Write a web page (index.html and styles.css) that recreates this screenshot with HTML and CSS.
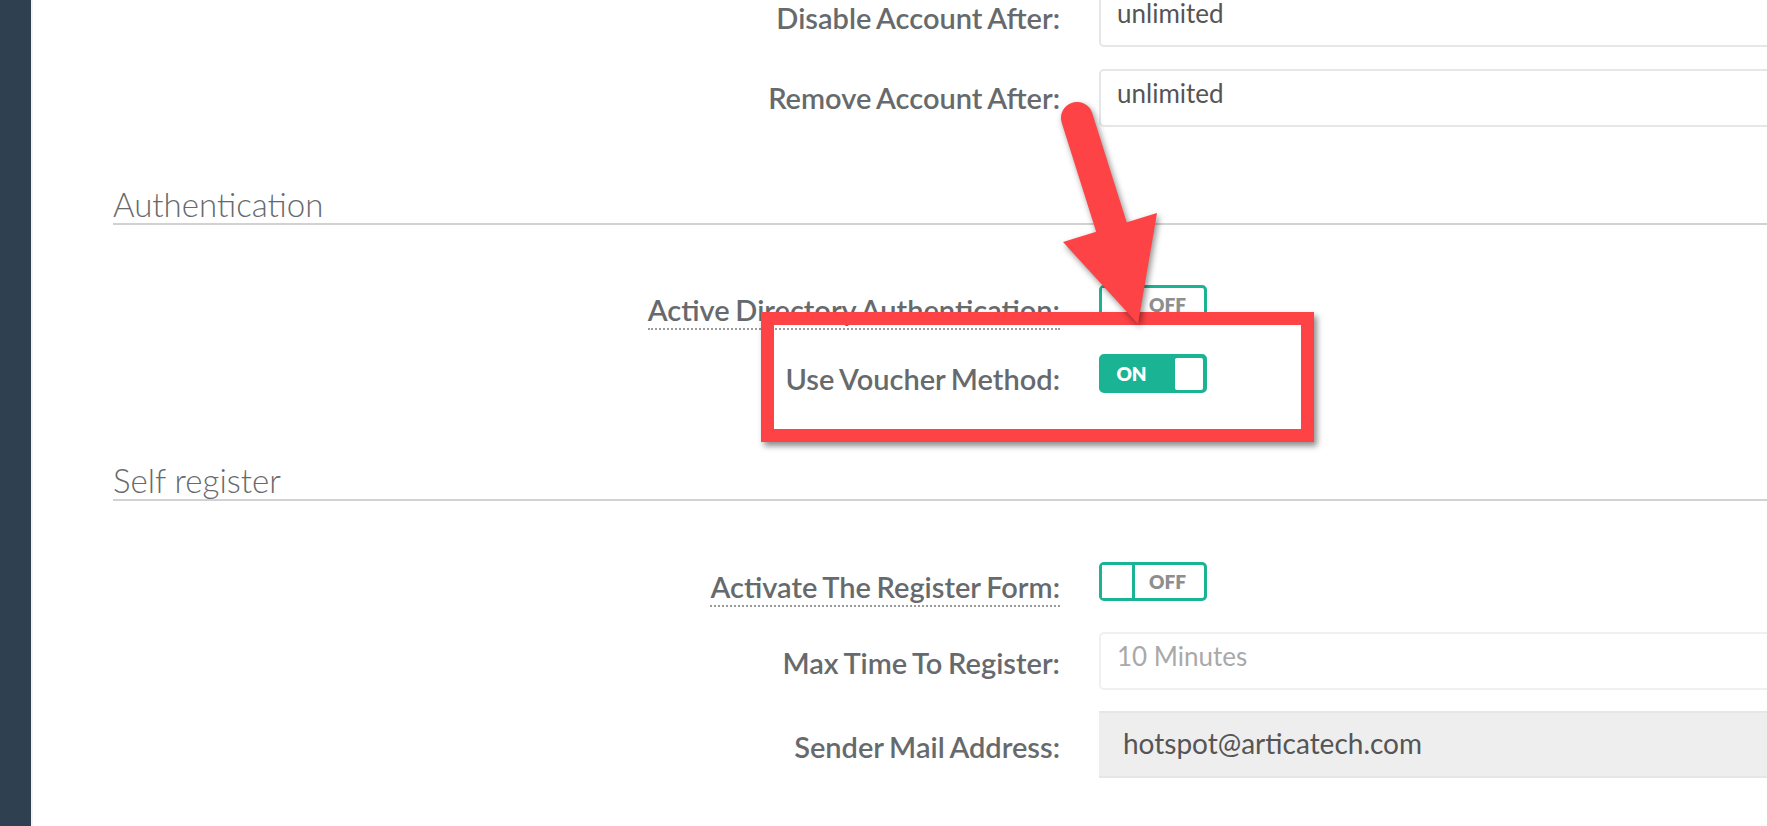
FILE: index.html
```html
<!DOCTYPE html>
<html lang="en">
<head>
<meta charset="utf-8">
<title>Hotspot settings</title>
<link rel="stylesheet" href="styles.css">
</head>
<body>
<div class="app">
  <aside class="sidebar"></aside>
  <main class="content">
    <div class="form-group first">
      <label class="control-label">Disable Account After:</label>
      <div class="form-control">unlimited</div>
    </div>
    <div class="form-group">
      <label class="control-label">Remove Account After:</label>
      <div class="form-control">unlimited</div>
    </div>

    <h3 class="legend">Authentication</h3>

    <div class="form-group toggle-row ad-row">
      <label class="control-label"><span class="hint">Active Directory Authentication:</span></label>
      <div class="switch off"><span class="knob"></span><span class="switch-label">OFF</span></div>
    </div>
    <div class="form-group toggle-row voucher-row">
      <label class="control-label">Use Voucher Method:</label>
      <div class="switch on"><span class="switch-label">ON</span><span class="knob"></span></div>
    </div>

    <h3 class="legend legend-self">Self register</h3>

    <div class="form-group toggle-row register-row">
      <label class="control-label"><span class="hint">Activate The Register Form:</span></label>
      <div class="switch off"><span class="knob"></span><span class="switch-label">OFF</span></div>
    </div>
    <div class="form-group maxtime-row">
      <label class="control-label">Max Time To Register:</label>
      <div class="form-control placeholder">10 Minutes</div>
    </div>
    <div class="form-group sender-row">
      <label class="control-label">Sender Mail Address:</label>
      <div class="form-control readonly">hotspot@articatech.com</div>
    </div>
  </main>
</div>

<div class="annot-box"></div>
<svg class="annot-arrow" width="1767" height="826" viewBox="0 0 1767 826">
  <g class="arrow-shape">
    <line x1="1077" y1="118" x2="1113" y2="232" stroke="#fd4346" stroke-width="32" stroke-linecap="round"/>
    <polygon points="1063,242 1157,213 1138,324" fill="#fd4346"/>
  </g>
</svg>
</body>
</html>
```
FILE: styles.css
```css
html, body {
  margin: 0;
  padding: 0;
  width: 1767px;
  height: 826px;
  overflow: hidden;
  background: #ffffff;
  font-family: Lato, "Open Sans", Arial, sans-serif;
  color: #676a6c;
}

.app {
  display: flex;
  height: 826px;
}

.sidebar {
  width: 31px;
  flex: 0 0 31px;
  background: #2f4050;
  border-right: 2px solid #f3f3f4;
}

.content {
  flex: 1;
  padding-left: 80px;
  overflow: hidden;
}

.form-group {
  display: grid;
  grid-template-columns: 947px 720px;
  column-gap: 39px;
  align-items: center;
  margin-bottom: 22px;
}

.form-group.first {
  margin-top: -11px;
}

.control-label {
  text-align: right;
  font-size: 29px;
  font-weight: 600;
  word-spacing: -1.5px;
  line-height: 34px;
  color: #676a6c;
  white-space: nowrap;
}

.toggle-row .control-label {
  padding-top: 5px;
  margin-bottom: -5px;
}

.maxtime-row .control-label {
  padding-top: 2px;
  margin-bottom: -2px;
}

.sender-row .control-label {
  padding-top: 2px;
  margin-bottom: -2px;
}

.hint {
  border-bottom: 2px dotted #9a9a9a;
  padding-bottom: 1px;
}

.form-control {
  box-sizing: border-box;
  height: 58px;
  border: 2px solid #e5e6e7;
  border-radius: 5px;
  padding: 0 16px;
  font-size: 26px;
  line-height: 44px;
  color: #555555;
  background: #ffffff;
  white-space: nowrap;
}

.form-control.placeholder {
  border-color: #f0f0f0;
  color: #a9a9a9;
  height: 58px;
}

.form-control.readonly {
  height: 67px;
  border: none;
  border-top: 2px solid #e6e6e6;
  border-bottom: 2px solid #e6e6e6;
  border-radius: 0;
  background: #eeeeee;
  padding-left: 24px;
  font-size: 28px;
  line-height: 60px;
}

.legend {
  margin: 59px 0 0 0;
  font-size: 33px;
  font-weight: 300;
  line-height: 37px;
  color: #676a6c;
  border-bottom: 2px solid #d2d2d2;
  padding: 0;
}

.legend-self {
  margin-top: 69px;
}

.toggle-row {
  margin-bottom: 30px;
}

.ad-row {
  margin-top: 60px;
}

.voucher-row {
  margin-bottom: 0;
}

.register-row {
  margin-top: 61px;
  margin-bottom: 31px;
}

.maxtime-row {
  margin-bottom: 21px;
}

.switch {
  box-sizing: border-box;
  width: 108px;
  height: 39px;
  border: 3px solid #1ab394;
  border-radius: 5px;
  display: flex;
  align-items: stretch;
  background: #ffffff;
  font-family: Lato, Arial, sans-serif;
  font-weight: 800;
  font-size: 19px;
}

.switch .switch-label {
  flex: 1;
  display: flex;
  align-items: center;
  justify-content: center;
}

.switch.on {
  background: #1ab394;
}

.switch.on .switch-label {
  color: #ffffff;
  padding-right: 14px;
}

.switch.on .knob {
  width: 28px;
  margin: 1px 1px 0 0;
  background: #ffffff;
  border-radius: 2px;
}

.switch.off .knob {
  width: 30px;
  border-right: 3px solid #1ab394;
  background: #ffffff;
}

.switch.off .switch-label {
  color: #8e8e8e;
  padding-right: 4px;
}

.annot-box {
  position: absolute;
  left: 761px;
  top: 312px;
  width: 553px;
  height: 130px;
  box-sizing: border-box;
  border: 13px solid #fd4346;
  box-shadow: 3px 4px 6px rgba(0, 0, 0, 0.45);
}

.annot-arrow {
  position: absolute;
  left: 0;
  top: 0;
  pointer-events: none;
}

.arrow-shape {
  filter: drop-shadow(2px 3px 3px rgba(0, 0, 0, 0.45));
}
```
